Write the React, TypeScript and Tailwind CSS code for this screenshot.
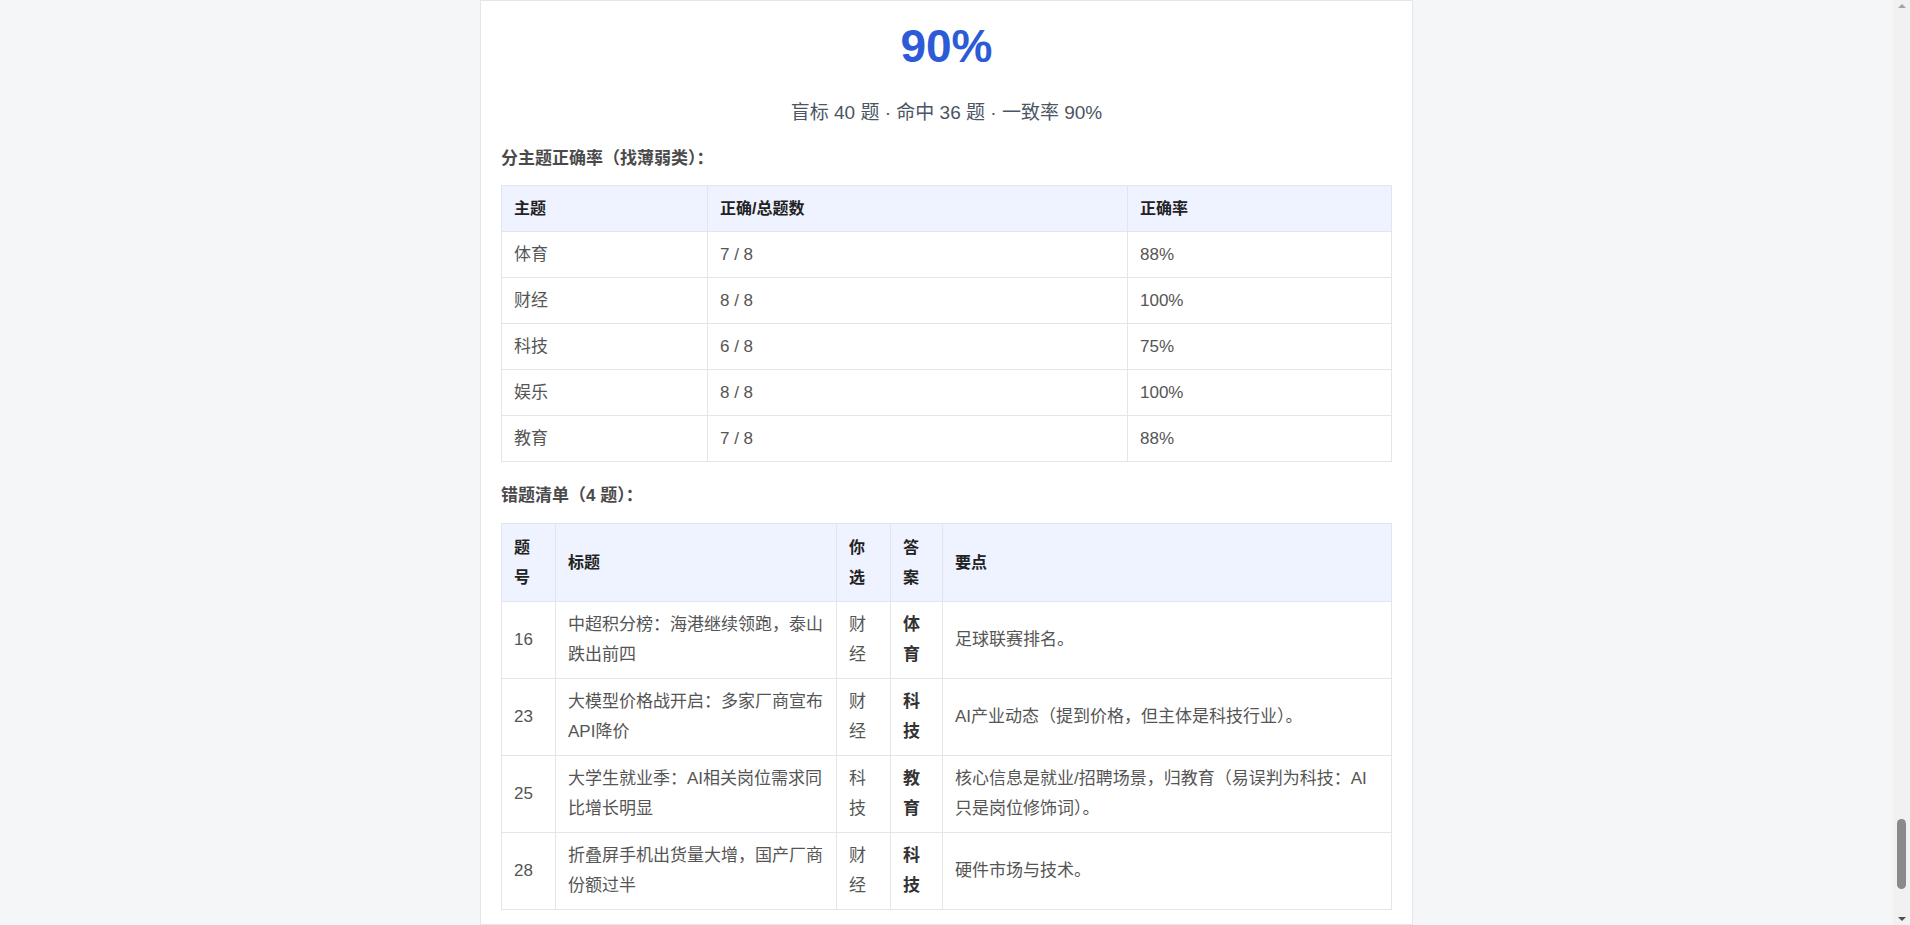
import React from "react";

const topics = [
  ["体育", "7 / 8", "88%"],
  ["财经", "8 / 8", "100%"],
  ["科技", "6 / 8", "75%"],
  ["娱乐", "8 / 8", "100%"],
  ["教育", "7 / 8", "88%"],
];

const wrong = [
  ["16", "中超积分榜：海港继续领跑，泰山跌出前四", "财经", "体育", "足球联赛排名。"],
  ["23", "大模型价格战开启：多家厂商宣布API降价", "财经", "科技", "AI产业动态（提到价格，但主体是科技行业）。"],
  ["25", "大学生就业季：AI相关岗位需求同比增长明显", "科技", "教育", "核心信息是就业/招聘场景，归教育（易误判为科技：AI只是岗位修饰词）。"],
  ["28", "折叠屏手机出货量大增，国产厂商份额过半", "财经", "科技", "硬件市场与技术。"],
];

const font = { fontFamily: '"Liberation Sans", "Noto Sans CJK SC", sans-serif' };

export default function App() {
  return (
    <div className="flex h-[925px] w-full overflow-hidden bg-[#f5f6f8]" style={font}>
      <div className="flex flex-1 justify-center">
        <div className="w-[933px] border border-[#e3e5e8] bg-white px-5 text-[#444]">
          <div className="pt-[17px] text-center text-[46px] font-bold leading-[56px] text-[#2d5bd8]">90%</div>
          <div className="mt-[25px] text-center text-[19px] leading-[28px] text-[#4b5563]">
            盲标 40 题 · 命中 36 题 · 一致率 90%
          </div>
          <div className="mt-[20px] text-[17px] font-bold leading-[24px] text-[#4a4a4a]">分主题正确率（找薄弱类）：</div>
          <table className="mt-[14px] w-full table-fixed border-collapse text-[17px]">
            <colgroup>
              <col className="w-[206px]" />
              <col className="w-[420px]" />
              <col />
            </colgroup>
            <thead>
              <tr className="h-[46px] bg-[#eef3ff] text-left text-[#222]">
                {["主题", "正确/总题数", "正确率"].map((h) => (
                  <th key={h} className="border border-[#e1e5ec] px-3 text-[16px] font-bold">{h}</th>
                ))}
              </tr>
            </thead>
            <tbody>
              {topics.map((r) => (
                <tr key={r[0]} className="h-[46px]">
                  {r.map((c, i) => (
                    <td key={i} className="border border-[#e1e5ec] px-3 text-[#555]">{c}</td>
                  ))}
                </tr>
              ))}
            </tbody>
          </table>
          <div className="mt-[22px] text-[17px] font-bold leading-[24px] text-[#4a4a4a]">错题清单（4 题）：</div>
          <table className="mt-[15px] w-full table-fixed border-collapse text-[17px] leading-[30px]">
            <colgroup>
              <col className="w-[54px]" />
              <col className="w-[281px]" />
              <col className="w-[54px]" />
              <col className="w-[52px]" />
              <col />
            </colgroup>
            <thead>
              <tr className="h-[78px] bg-[#eef3ff] text-left text-[#222]">
                {["题号", "标题", "你选", "答案", "要点"].map((h) => (
                  <th key={h} className="border border-[#e1e5ec] px-3 py-2 text-[16px] font-bold">{h}</th>
                ))}
              </tr>
            </thead>
            <tbody>
              {wrong.map((r) => (
                <tr key={r[0]} className="h-[77px]">
                  {r.map((c, i) => (
                    <td
                      key={i}
                      className={`border border-[#e1e5ec] px-3 py-2 ${i === 3 ? "font-bold text-[#333]" : "text-[#555]"}`}
                    >
                      {c}
                    </td>
                  ))}
                </tr>
              ))}
            </tbody>
          </table>
        </div>
      </div>
      <div className="flex w-[17px] flex-col items-center bg-[#f1f1f1]">
        <div className="mt-[4px] h-0 w-0 border-x-[4px] border-b-[4px] border-x-transparent border-b-[#a3a3a3]" />
        <div className="flex-1" />
        <div className="mb-[28px] h-[70px] w-[9px] rounded-full bg-[#8a8a8a]" />
        <div className="mb-[4px] h-0 w-0 border-x-[4px] border-t-[4px] border-x-transparent border-t-[#505050]" />
      </div>
    </div>
  );
}
